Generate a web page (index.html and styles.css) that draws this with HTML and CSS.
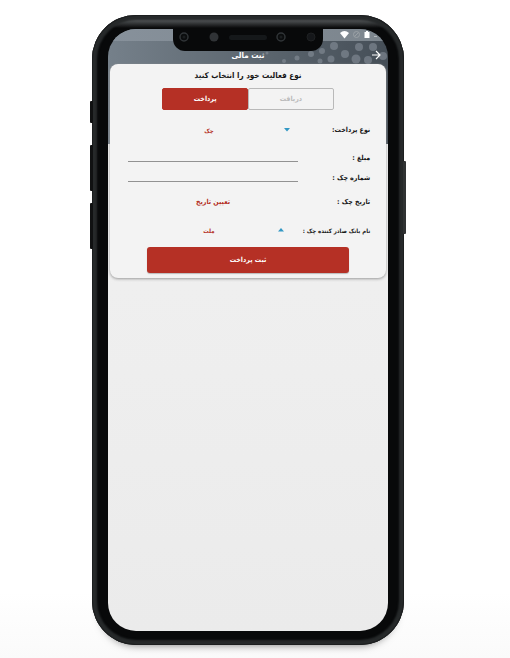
FILE: index.html
```html
<!DOCTYPE html>
<html lang="fa" dir="rtl">
<head>
<meta charset="utf-8">
<meta name="viewport" content="width=device-width, initial-scale=1">
<title>ثبت مالی</title>
<link rel="stylesheet" href="styles.css">
</head>
<body>
<main class="phone">
  <span class="key key-mute"></span>
  <span class="key key-up"></span>
  <span class="key key-down"></span>
  <span class="key key-power"></span>
  <div class="screen">
    <div class="notch">
      <svg width="150" height="23" viewBox="0 0 150 23" aria-hidden="true">
        <circle cx="11" cy="9" r="4" fill="#0b0d0e" stroke="#303437" stroke-width="1.5"/>
        <circle cx="11" cy="9" r="1.5" fill="#1a1d1f"/>
        <circle cx="41" cy="9" r="4.5" fill="#303336"/>
        <rect x="56" y="7" width="38" height="5" rx="2.5" fill="#15181a"/>
        <circle cx="108" cy="9" r="4" fill="#0b0d0e" stroke="#303437" stroke-width="1.5"/>
        <circle cx="108" cy="9" r="1.5" fill="#1a1d1f"/>
        <circle cx="138" cy="9" r="4" fill="#15171a" stroke="#1e2022"/>
      </svg>
    </div>
    <header class="header">
      <div class="status">
        <svg width="50" height="12" viewBox="0 0 50 12" aria-hidden="true">
          <path d="M2 4Q6.500 0 11 4L6.500 9.500Z" fill="#fff"/>
          <circle cx="18.500" cy="5.500" r="3" fill="none" stroke="#9aa0a5"/>
          <path d="M16.500 7.500L20.500 3.500" stroke="#9aa0a5"/>
          <path d="M26.500 3H28V2H30V3H31.500V9H26.500Z" fill="#fff"/>
          <path d="M36 7.500H39" stroke="#b5babd"/>
        </svg>
      </div>
      <div class="appbar">
        <svg class="dots" width="130" height="23" viewBox="0 0 130 23" aria-hidden="true">
          <g fill="#87909a" fill-opacity=".6">
            <circle cx="9" cy="12" r="1.500"/><circle cx="26" cy="20" r="2"/>
            <circle cx="39" cy="17" r="2.500"/><circle cx="53" cy="13" r="3"/>
            <circle cx="64" cy="10" r="3"/><circle cx="62" cy="20" r="2.500"/>
            <circle cx="76" cy="5" r="4"/><circle cx="73" cy="18" r="3.500"/>
            <circle cx="87" cy="13" r="4"/><circle cx="101" cy="6" r="4"/>
            <circle cx="98" cy="18" r="4.500"/><circle cx="115" cy="6" r="4"/>
            <circle cx="110" cy="19" r="4"/><circle cx="125" cy="15" r="4"/>
          </g>
        </svg>
        <h1 class="title">ثبت مالی</h1>
        <button class="back" type="button" aria-label="بازگشت">
          <svg width="10" height="10" viewBox="0 0 10 10" aria-hidden="true"><path d="M1 5H9M5 1L9 5L5 9" fill="none" stroke="#fff" stroke-width="1.200"/></svg>
        </button>
      </div>
    </header>
    <form class="card">
      <h2 class="question">نوع فعالیت خود را انتخاب کنید</h2>
      <div class="tabs">
        <button class="tab" type="button">دریافت</button>
        <button class="tab active" type="button">پرداخت</button>
      </div>
      <div class="fields">
        <div class="row gap-after">
          <label for="kind">نوع پرداخت:</label>
          <div class="pick">
            <select id="kind"><option>چک</option></select>
            <svg class="caret" width="6" height="4" viewBox="0 0 6 4" aria-hidden="true"><path d="M0 0H6L3 3.500Z" fill="#3298c4"/></svg>
          </div>
        </div>
        <div class="row short">
          <label for="amount">مبلغ :</label>
          <input id="amount" type="text">
        </div>
        <div class="row short">
          <label for="number">شماره چک :</label>
          <input id="number" type="text">
        </div>
        <div class="row">
          <label for="date">تاریخ چک :</label>
          <button class="date" id="date" type="button">تعیین تاریخ</button>
        </div>
        <div class="row">
          <label class="long" for="bank">نام بانک صادر کننده چک :</label>
          <div class="pick bank">
            <select id="bank"><option>ملت</option></select>
            <svg class="caret" width="6" height="4" viewBox="0 0 6 4" aria-hidden="true"><path d="M0 3.500H6L3 0Z" fill="#3298c4"/></svg>
          </div>
        </div>
      </div>
      <button class="submit" type="submit">ثبت پرداخت</button>
    </form>
  </div>
</main>
</body>
</html>
```

FILE: styles.css
```css
* {
  box-sizing: border-box;
}

body {
  margin: 0;
  min-height: 100vh;
  padding: 15px 14px 13px 0;
  direction: rtl;
  display: flex;
  flex-direction: column;
  align-items: center;
  background: linear-gradient(#fff 90%, #fafafa);
  font-family: "DejaVu Sans Condensed", "DejaVu Sans", sans-serif;
  color: #161616;
}

button,
input,
select {
  margin: 0;
  padding: 0;
  border: 0;
  background: none;
  font: inherit;
  color: inherit;
}

h1,
h2 {
  margin: 0;
}

.phone {
  position: relative;
  display: flex;
  width: 63%;
  flex: 1;
  padding: 14px 16px;
  border-radius: 44px;
  background: linear-gradient(#696c6e, #4a4d4f 6px, #08090a 13px, #08090a);
  box-shadow: inset 0 0 0 1px #1c1e1f, inset 0 0 2px 5px #26292a, 0 8px 8px -8px #777;
}

.key {
  position: absolute;
  left: -2px;
  width: 3px;
  background: #101112;
  border-radius: 1px;
}

.key-mute {
  top: 86px;
  height: 22px;
}

.key-up {
  top: 130px;
  height: 46px;
}

.key-down {
  top: 188px;
  height: 46px;
}

.key-power {
  left: auto;
  right: -2px;
  top: 146px;
  height: 73px;
  background: #303233;
}

.screen {
  position: relative;
  flex: 1;
  min-width: 0;
  overflow: hidden;
  border-radius: 28px;
  background:
    linear-gradient(90deg, #75808a, #59636c 60%, #454e57) top / 100% 115px no-repeat,
    linear-gradient(#f2f2f2, #ebebeb);
}

.notch {
  position: absolute;
  z-index: 1;
  top: -1px;
  left: 0;
  right: 0;
  width: 150px;
  height: 23px;
  margin: 0 auto;
  border-radius: 0 0 12px 12px;
  background: #08090a;
}

.notch svg {
  display: block;
}

.status {
  display: flex;
  direction: ltr;
  justify-content: flex-end;
  height: 12px;
  background: linear-gradient(90deg, #87919b, #7c858d);
}

.appbar {
  position: relative;
  display: grid;
  grid-template-columns: 24px 1fr 24px;
  align-items: end;
  height: 23px;
}

.dots {
  position: absolute;
  right: 0;
  top: 0;
}

.title {
  grid-column: 2;
  position: relative;
  font-size: 8px;
  line-height: 16px;
  text-align: center;
  color: #fff;
}

.back {
  position: relative;
  grid-column: 1;
  grid-row: 1;
  height: 18px;
}

.back svg {
  display: block;
  margin: 0 auto;
}

.card {
  margin: 0 2px;
  padding-bottom: 5px;
  border-radius: 8px;
  background: #f3f3f3;
  box-shadow: 0 1px 3px #999;
}

.question {
  font-size: 8px;
  line-height: 24px;
  text-align: center;
}

.tabs {
  display: grid;
  grid-template-columns: 1fr 1fr;
  width: 62%;
  margin: 0 auto 6px;
}

.tab {
  height: 22px;
  border: 1px solid #b9b9b9;
  border-radius: 2px;
  font-size: 7px;
  font-weight: bold;
  color: #bbb;
}

.active {
  border-color: #b53025;
  background: #b53025;
  color: #fff;
}

.fields {
  padding: 0 16px 0 18px;
}

.row {
  display: grid;
  grid-template-columns: 72px 1fr;
  align-items: center;
  height: 28px;
}

.gap-after {
  margin-bottom: 4px;
}

.short {
  height: 20px;
}

label {
  font-size: 7px;
  font-weight: bold;
  white-space: nowrap;
}

.long {
  font-size: 6px;
}

input {
  align-self: start;
  width: 100%;
  height: 14px;
  border-bottom: 1px solid #929292;
  font-size: 7px;
}

.pick {
  position: relative;
  padding-right: 8px;
}

select {
  display: block;
  width: 100%;
  height: 20px;
  appearance: none;
  font-size: 6px;
  font-weight: bold;
  text-align: center;
  text-align-last: center;
  color: #b53025;
}

.caret {
  position: absolute;
  top: 8px;
  right: 8px;
}

.bank .caret {
  right: 14px;
}

.date {
  height: 20px;
  font-size: 7px;
  font-weight: bold;
  color: #b53025;
}

.submit {
  display: block;
  width: 73%;
  height: 26px;
  margin: 3px auto 0;
  border-radius: 3px;
  background: #b53025;
  box-shadow: 0 1px 1px #bbb;
  font-size: 7px;
  font-weight: bold;
  color: #fff;
}
```
